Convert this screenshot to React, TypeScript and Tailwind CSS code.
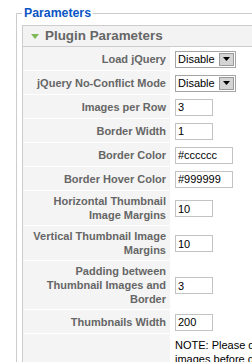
import React from "react";

type Param = {
  label: React.ReactNode;
  kind: "select" | "text";
  value: string;
  width?: string;
};

const params: Param[] = [
  { label: "Load jQuery", kind: "select", value: "Disable" },
  { label: "jQuery No-Conflict Mode", kind: "select", value: "Disable" },
  { label: "Images per Row", kind: "text", value: "3" },
  { label: "Border Width", kind: "text", value: "1" },
  { label: "Border Color", kind: "text", value: "#cccccc", width: "w-[58px]" },
  { label: "Border Hover Color", kind: "text", value: "#999999", width: "w-[58px]" },
  { label: <>Horizontal Thumbnail<br />Image Margins</>, kind: "text", value: "10" },
  { label: <>Vertical Thumbnail Image<br />Margins</>, kind: "text", value: "10" },
  { label: <>Padding between<br />Thumbnail Images and<br />Border</>, kind: "text", value: "3" },
  { label: "Thumbnails Width", kind: "text", value: "200" },
];

function FakeSelect({ value }: { value: string }) {
  return (
    <div className="flex h-[17px] w-[61px] items-stretch border border-[#a5a5a5] bg-white">
      <span className="flex flex-1 items-center pl-[2px] leading-none text-black">{value}</span>
      <span className="m-[1px] flex w-[15px] items-center justify-center border border-[#9a9a9a] bg-[#d4d4d4]">
        <svg width="7" height="4" viewBox="0 0 7 4">
          <path d="M0 0h7L3.5 4z" fill="#000" />
        </svg>
      </span>
    </div>
  );
}

function ParamRow({ p }: { p: Param }) {
  return (
    <div className="flex">
      <div className="flex min-h-[24px] w-[148px] shrink-0 items-center justify-end border-b border-r border-white bg-[#f4f4f4] py-[3px] pr-[4px] text-right font-bold leading-[14px] text-[#666]">
        <span>{p.label}</span>
      </div>
      <div className="flex items-center pl-[4px]">
        {p.kind === "select" ? (
          <FakeSelect value={p.value} />
        ) : (
          <input
            readOnly
            value={p.value}
            className={`h-[17px] ${p.width ?? "w-[38px]"} border border-[#c3c3c3] px-[2px] text-[11px] leading-none text-black outline-none`}
          />
        )}
      </div>
    </div>
  );
}

export default function App() {
  return (
    <div className="h-[362px] w-[252px] overflow-hidden bg-white font-['Liberation_Sans',Arial,sans-serif] text-[11px]">
      <fieldset className="ml-[16px] mt-[6px] w-[320px] border border-[#cccccc] pl-[5px] pt-[5px]">
        <legend className="px-[2px] text-[12.3px] font-bold leading-[14px] text-[#0b55c4]">Parameters</legend>
        <div className="border border-[#cccccc]">
          <div className="flex h-[21px] items-center gap-[6px] border-b border-[#cccccc] bg-[#f3f3f3] pl-[8px]">
            <svg width="8" height="5" viewBox="0 0 8 5">
              <path d="M0 0h8L4 5z" fill="#7dba55" />
            </svg>
            <span className="text-[13.4px] font-bold text-[#666]">Plugin Parameters</span>
          </div>
          {params.map((p, i) => (
            <ParamRow key={i} p={p} />
          ))}
          <div className="flex">
            <div className="h-[60px] w-[148px] shrink-0 border-r border-white bg-[#f4f4f4]" />
            <div className="whitespace-nowrap pl-[4px] pt-[4px] leading-[14px] text-black">
              NOTE: Please delete the cached thumbnail
              <br />
              images before changing these settings.
            </div>
          </div>
        </div>
      </fieldset>
    </div>
  );
}
